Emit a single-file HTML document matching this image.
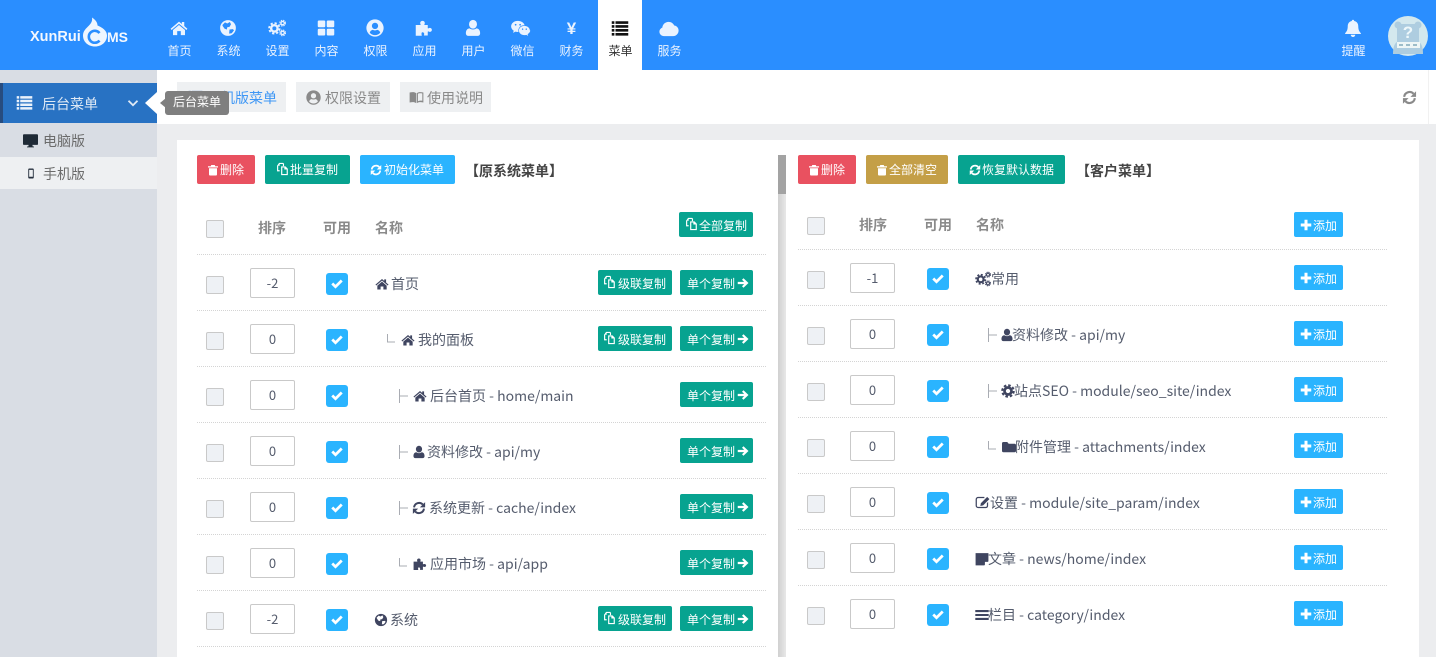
<!DOCTYPE html>
<html lang="zh"><head><meta charset="utf-8"><title>菜单</title>
<style>
*{box-sizing:border-box}
html,body{margin:0;padding:0;width:1436px;height:657px;overflow:hidden;background:#ecedef;font-family:"Noto Sans CJK SC","Liberation Sans",sans-serif;font-size:14px;color:#555c6d}
div,span,svg{position:absolute}
svg{fill:currentColor;display:block}
.nt{white-space:nowrap;line-height:20px}
.nav{top:0;width:49px;height:70px;color:#eaf3ff;text-align:center}
.nav svg{left:15px;top:19px;width:18px;height:18px}
.nav span{left:0;width:49px;top:42px;font-size:12px;line-height:18px}
.btn{height:29px;border-radius:2px;color:#fff;font-size:12px;line-height:30px;white-space:nowrap}
.btn svg{width:12px;height:12px;top:9px}
.btn svg.cp{width:14px;height:14px;top:7px;margin-left:-1px}
.b2{height:25px;line-height:27px}.b2 svg{top:7px}.b2 svg.cp{top:5px}
.red{background:#e95160}.teal{background:#07a390}.blue{background:#2ab4ff}.gold{background:#c49f47}
.row{left:0;top:0;width:1436px;height:56px}
.line{top:0;height:0;border-top:1px dotted #d4d4d4}
.cb{width:18px;height:18px;background:#eef1f5;border:1px solid #c9c9c9;border-radius:2px;top:22px}
.inp{width:45px;height:30px;top:14px;background:#fff;border:1px solid #c9c9c9;border-radius:2px;text-align:center;font-size:13px;line-height:27px;color:#555c6d}
.chk{width:22px;height:22px;top:19px;background:#2ab4ff;border-radius:3px}
.chk svg{left:5px;top:4px;width:12px;height:12px;color:#fff}
.name{top:20px;font-size:14px;line-height:20px;white-space:nowrap}
.ic{color:#3f4560;top:23px;width:14px;height:14px}
.tree{top:23px;width:9px;height:14px;fill:none;stroke:#a9acb3;stroke-width:1}
.hd{font-size:14px;font-weight:700;color:#8a8a8a;line-height:20px;white-space:nowrap}
.tab{top:82px;height:30px;background:#eef0f2;font-size:14px;line-height:32px;color:#8a8a8a;white-space:nowrap}
</style></head><body>
<svg width="0" height="0" style="position:absolute">
<defs>
<symbol id="home" viewBox="0 0 24 24"><path d="M12 3.500 0.800 13l1.300 1.600L12 6.300l9.900 8.300 1.300-1.600L19 9.400V4h-3.200v2.700z"/><path d="M12 8 4 14.700V21.500h5.600v-5.300h4.800v5.300H20v-6.800z"/></symbol>
<symbol id="globe" viewBox="0 0 24 24"><path fill-rule="evenodd" d="M12 1.500a10.500 10.500 0 1 0 0 21 10.500 10.500 0 0 0 0-21zM8 4.500l3 1.500 3.500-2 1.500 3-2 3.500-3 .5-.5 3-3-1L5 9.500 4.500 8zM14 14l4.500-.5 1.500 1.500-3 4-3.500.5z"/></symbol>
<symbol id="cogs" viewBox="0 0 24 24"><circle cx="8.500" cy="12.500" r="4.300" fill="none" stroke="currentColor" stroke-width="3.200"/><circle cx="8.500" cy="12.500" r="7" fill="none" stroke="currentColor" stroke-width="2.400" stroke-dasharray="3 2.500"/><circle cx="19.500" cy="5.500" r="2.300" fill="none" stroke="currentColor" stroke-width="1.800"/><circle cx="19.500" cy="5.500" r="3.900" fill="none" stroke="currentColor" stroke-width="1.300" stroke-dasharray="1.800 1.300"/><circle cx="19.500" cy="18.500" r="2.300" fill="none" stroke="currentColor" stroke-width="1.800"/><circle cx="19.500" cy="18.500" r="3.900" fill="none" stroke="currentColor" stroke-width="1.300" stroke-dasharray="1.800 1.300"/></symbol>
<symbol id="th" viewBox="0 0 24 24"><rect x="1" y="2" width="10" height="9" rx="1.500"/><rect x="13" y="2" width="10" height="9" rx="1.500"/><rect x="1" y="13" width="10" height="9" rx="1.500"/><rect x="13" y="13" width="10" height="9" rx="1.500"/></symbol>
<symbol id="ucircle" viewBox="0 0 24 24"><path fill-rule="evenodd" d="M12 .5a11.500 11.500 0 1 0 0 23 11.500 11.500 0 0 0 0-23zM12 5a4.200 4.200 0 1 1 0 8.400A4.200 4.200 0 0 1 12 5zm0 16.500a9.500 9.500 0 0 1-7-3.200c.6-2.300 2.400-3.800 4.300-3.800 1 .5 1.800.7 2.700.7s1.700-.2 2.700-.7c1.900 0 3.700 1.500 4.300 3.800a9.500 9.500 0 0 1-7 3.200z"/></symbol>
<symbol id="puzzle" viewBox="0 0 24 24"><path d="M1 8h6c1 0 .2-1.200 0-2-.4-2 1-3.500 3-3.500s3.400 1.500 3 3.500c-.2.800-1 2 0 2h4v4c0 1 1.200.2 2 0 1.500-.4 3.500.5 3.500 2.500s-2 3-3.500 2.500c-.8-.2-2-1-2 0v5h-4.500c-1 0-.2-1-.2-2 0-1.300-1-2.300-2.300-2.300S8.700 19 8.700 20.300c0 1 .8 2 0 2H1z"/></symbol>
<symbol id="user" viewBox="0 0 24 24"><ellipse cx="12" cy="7" rx="5.300" ry="5.800"/><path d="M2.500 19c0-4 2-6.500 5-6.500 1.300 1 2.800 1.500 4.500 1.500s3.200-.5 4.500-1.500c3 0 5 2.500 5 6.500 0 2-1.300 3.500-3.300 3.500H5.800c-2 0-3.300-1.500-3.300-3.500z"/></symbol>
<symbol id="wechat" viewBox="0 0 26 24"><path fill-rule="evenodd" d="M9.500 2.500C4.500 2.500.5 5.700.5 9.800c0 2.400 1.300 4.300 3.500 5.800L3 18.500l3.300-1.700c1.100.3 2 .5 3.200.5h.9a7 7 0 0 1-.3-2c0-3.800 3.300-7 7.500-7h.9C17.600 5 13.900 2.500 9.500 2.500zM6.500 6.500a1.200 1.200 0 1 1 0 2.400 1.200 1.200 0 0 1 0-2.400zm6 0a1.200 1.200 0 1 1 0 2.400 1.200 1.200 0 0 1 0-2.400z"/><path fill-rule="evenodd" d="M25.500 15.300c0-3.400-3.400-6.200-7.300-6.200-4.100 0-7.300 2.800-7.300 6.200s3.200 6.200 7.300 6.200c.8 0 1.700-.2 2.500-.4l2.500 1.400-.7-2.300c2-1.400 3.500-3 3.500-4.900zM15.800 12.500a1 1 0 1 1 0 2 1 1 0 0 1 0-2zm4.900 0a1 1 0 1 1 0 2 1 1 0 0 1 0-2z"/></symbol>
<symbol id="list" viewBox="0 0 24 24"><path d="M1 3h3.500v3.500H1zM6 3h17v3.500H6zM1 8.200h3.500v3.500H1zM6 8.200h17v3.500H6zM1 13.400h3.500v3.500H1zM6 13.400h17v3.500H6zM1 18.600h3.500v3.500H1zM6 18.600h17v3.500H6z"/></symbol>
<symbol id="cloud" viewBox="0 0 24 24"><path d="M6 20.500c-3 0-5.500-2.300-5.500-5.200 0-2.300 1.400-4.200 3.500-5C4.300 6.500 7.500 3.500 11.500 3.500c3 0 5.500 1.700 6.700 4.300 3 .2 5.300 2.900 5.300 6.100 0 3.600-2.900 6.600-6.500 6.600z"/></symbol>
<symbol id="bell" viewBox="0 0 24 24"><path d="M12 1c-1 0-1.600.7-1.600 1.700C7 3.500 5 6 5 9.500c0 6-2 7.500-3.500 9.500v1h21v-1C21 17 19 15.500 19 9.500c0-3.500-2-6-5.400-6.800C13.600 1.700 13 1 12 1zM9 21a3 3 0 0 0 6 0z"/></symbol>
<symbol id="sync" viewBox="0 0 24 24"><path d="M3.500 11a8.700 8.700 0 0 1 15-5" fill="none" stroke="currentColor" stroke-width="3.400"/><path d="M22.500 2v9h-9z"/><path d="M20.500 13a8.700 8.700 0 0 1-15 5" fill="none" stroke="currentColor" stroke-width="3.400"/><path d="M1.500 22v-9h9z"/></symbol>
<symbol id="trash" viewBox="0 0 24 24"><path d="M8.500 2h7l1 2.500H22V7H2V4.500h5.500zM4 8.500h16V21a2 2 0 0 1-2 2H6a2 2 0 0 1-2-2z"/></symbol>
<symbol id="copy" viewBox="0 0 24 24"><path d="M7 1.500h7l1.500 1.500v4h-2V3.500H8v3l-2.500 0V14H8v2H3.500V6.500zM10.500 7.500H18l4 4v11H10.500zM12.500 9.500v11h7.500V12.800h-4V9.500z" fill-rule="evenodd"/></symbol>
<symbol id="arrow" viewBox="0 0 24 24"><path d="M13 2.500 23 12 13 21.500l-3-3 4.300-4.300H1.500V9.800h12.800L10 5.500z"/></symbol>
<symbol id="plus" viewBox="0 0 24 24"><path d="M9 1.500h6V9h7.500v6H15v7.500H9V15H1.500V9H9z"/></symbol>
<symbol id="check" viewBox="0 0 24 24"><path d="M2.500 13 9 19.500 21.500 7" fill="none" stroke="currentColor" stroke-width="5.400"/></symbol>
<symbol id="desktop" viewBox="0 0 24 24"><path d="M1.500 2h21a1.500 1.500 0 0 1 1.500 1.500v14a1.500 1.500 0 0 1-1.500 1.500H15l.6 2.500h2v1.500H6.400v-1.500h2L9 19H1.500A1.500 1.500 0 0 1 0 17.500v-14A1.500 1.500 0 0 1 1.500 2z"/></symbol>
<symbol id="mobile" viewBox="0 0 12 24"><path fill-rule="evenodd" d="M2 1h8a2 2 0 0 1 2 2v18a2 2 0 0 1-2 2H2a2 2 0 0 1-2-2V3a2 2 0 0 1 2-2zM2 4v15h8V4z"/></symbol>
<symbol id="book" viewBox="0 0 24 24"><path d="M1 4c4-1 8-1 10.500 1v16C9 19 5 19 1 20z"/><path fill-rule="evenodd" d="M12.500 5C15 3 19 3 23 4v16c-4-1-8-1-10.500 1zM14.300 6v12c2-1 4.500-1.200 7-.8V5.600C19 5.200 16 5 14.300 6z"/></symbol>
<symbol id="edit" viewBox="0 0 24 24"><path d="M17.500 21H5a4 4 0 0 1-4-4V7a4 4 0 0 1 4-4h10v2H5a2 2 0 0 0-2 2v10a2 2 0 0 0 2 2h12a2 2 0 0 0 2-2v-4l2-2v6a4 4 0 0 1-3.500 4z" /><path d="M19.500 3 23 6.500 13 16.500l-4.500 1 1-4.500z"/></symbol>
<symbol id="folder" viewBox="0 0 24 24"><path d="M2.500 3.500h6.500l2.500 3h10A2.500 2.500 0 0 1 24 9v9.500a2.500 2.500 0 0 1-2.500 2.500h-19A2.500 2.500 0 0 1 0 18.500V6a2.500 2.500 0 0 1 2.500-2.500z"/></symbol>
<symbol id="cog" viewBox="0 0 24 24"><circle cx="12" cy="12" r="6" fill="none" stroke="currentColor" stroke-width="4.600"/><circle cx="12" cy="12" r="9.800" fill="none" stroke="currentColor" stroke-width="3.600" stroke-dasharray="4.400 3.300"/></symbol>
<symbol id="bars" viewBox="0 0 24 24"><path d="M.5 3.500h23v3.600H.5zM.5 10.200h23v3.600H.5zM.5 16.900h23v3.600H.5z"/></symbol>
<symbol id="note" viewBox="0 0 24 24"><path d="M1 2h22v14l-7 7H1z"/><path d="M17 17h6l-6 6z" fill="#fff"/></symbol>
<symbol id="chev" viewBox="0 0 24 24"><path d="M3 7.500l9 9 9-9" fill="none" stroke="currentColor" stroke-width="3.600"/></symbol>
<symbol id="t1" viewBox="0 0 9 14"><path d="M.5 0v14M.5 7H9"/></symbol>
<symbol id="t2" viewBox="0 0 9 14"><path d="M.5 1v8H8"/></symbol>
</defs></svg>

<!-- header -->
<div style="left:0;top:0;width:1436px;height:70px;background:#2a8eff"></div>
<div style="left:30px;top:28px;font:700 14.500px/18px 'Liberation Sans',sans-serif;color:#f4f8ff;white-space:nowrap">XunRui</div>
<div style="left:107px;top:28px;font:700 14px/18px 'Liberation Sans',sans-serif;color:#f4f8ff;white-space:nowrap">MS</div>
<svg style="left:82px;top:17px;width:26px;height:30px;color:#eef6ff" viewBox="0 0 26 30"><path d="M13 29.500C6 29.500 1 24.700 1 18.500 1 14 4 11.500 7 8.500 9.500 6 10.500 3.500 10 .5c4 2.500 5.500 5.500 5.500 8 3.500 1.500 9.500 4.500 9.500 10 0 6.200-5 11-12 11z"/><path d="M17.500 16a6 6 0 1 0 0 7.500" fill="none" stroke="#2a8eff" stroke-width="2.600"/></svg>

<div class="nav" style="left:155px"><svg><use href="#home"/></svg><span>首页</span></div>
<div class="nav" style="left:204px"><svg><use href="#globe"/></svg><span>系统</span></div>
<div class="nav" style="left:253px"><svg><use href="#cogs"/></svg><span>设置</span></div>
<div class="nav" style="left:302px"><svg><use href="#th"/></svg><span>内容</span></div>
<div class="nav" style="left:351px"><svg><use href="#ucircle"/></svg><span>权限</span></div>
<div class="nav" style="left:400px"><svg><use href="#puzzle"/></svg><span>应用</span></div>
<div class="nav" style="left:449px"><svg><use href="#user"/></svg><span>用户</span></div>
<div class="nav" style="left:498px"><svg style="left:12px;width:21px"><use href="#wechat"/></svg><span>微信</span></div>
<div class="nav" style="left:547px"><div style="left:0;width:49px;top:18px;font-size:17px;line-height:22px;font-weight:700;font-family:'Liberation Sans',sans-serif">¥</div><span>财务</span></div>
<div style="left:598px;top:0;width:44px;height:70px;background:#fff"></div>
<div class="nav" style="left:596px;color:#111"><svg><use href="#list"/></svg><span style="color:#333">菜单</span></div>
<div class="nav" style="left:645px"><svg style="left:14px;width:20px;height:20px"><use href="#cloud"/></svg><span>服务</span></div>
<div class="nav" style="left:1329px"><svg><use href="#bell"/></svg><span>提醒</span></div>
<svg style="left:1388px;top:16px;width:40px;height:40px" viewBox="0 0 40 40"><circle cx="20" cy="20" r="20" fill="#d3e8ee"/><circle cx="10" cy="9" r="3.500" fill="#aecde0"/><circle cx="30" cy="9" r="3.500" fill="#aecde0"/><path d="M9 8h22v18H9z" fill="#aecde0"/><path d="M5 38c0-8 2-12 6-13h18c4 1 6 5 6 13z" fill="#aecde0"/><rect x="9" y="26" width="23" height="6" fill="#eef6f6"/><path d="M11 28h4v2h-4zM18 28h4v2h-4zM25 28h4v2h-4z" fill="#9dbdc9"/><text x="20" y="22" font-family="Liberation Sans,sans-serif" font-size="17" font-weight="700" fill="#eef8fb" text-anchor="middle">?</text></svg>

<!-- sidebar -->
<div style="left:0;top:70px;width:157px;height:587px;background:#d9dde4"></div>
<div style="left:0;top:83px;width:157px;height:40px;background:#2872c3;border-left:3px solid #274c7f"></div>
<svg style="left:16px;top:94px;width:17px;height:17px;color:#eaf2fb"><use href="#list"/></svg>
<div class="nt" style="left:42px;top:94px;color:#dfe9f5">后台菜单</div>
<svg style="left:127px;top:97px;width:12px;height:12px;color:#dfe9f5"><use href="#chev"/></svg>
<svg style="left:145px;top:92px;width:12px;height:22px;color:#fff" viewBox="0 0 12 22"><path d="M12 0v22L0 11z"/></svg>
<svg style="left:23px;top:133px;width:15px;height:15px;color:#1f2a36"><use href="#desktop"/></svg>
<div class="nt" style="left:43px;top:131px;color:#6b6b6b">电脑版</div>
<div style="left:0;top:157px;width:157px;height:32px;background:#eef0f2"></div>
<svg style="left:28px;top:168px;width:6px;height:11px;color:#26303e"><use href="#mobile"/></svg>
<div class="nt" style="left:43px;top:164px;color:#6b6b6b">手机版</div>

<!-- top bar -->
<div style="left:157px;top:70px;width:1279px;height:54px;background:#fff"></div>
<div style="left:1428px;top:70px;width:1px;height:54px;background:#f1f1f1"></div>
<div class="tab" style="left:177px;width:109px;color:#3f97f5"><svg style="left:11px;top:7px;width:15px;height:15px;color:#2c5f9e"><use href="#list"/></svg><span style="left:30px;top:0">手机版菜单</span></div>
<div class="tab" style="left:296px;width:94px"><svg style="left:10px;top:8px;width:15px;height:15px"><use href="#ucircle"/></svg><span style="left:29px;top:0">权限设置</span></div>
<div class="tab" style="left:400px;width:91px"><svg style="left:9px;top:8px;width:15px;height:15px"><use href="#book"/></svg><span style="left:27px;top:0">使用说明</span></div>
<svg style="left:1402px;top:90px;width:15px;height:15px;color:#8a8a8a"><use href="#sync"/></svg>
<svg style="left:160px;top:98px;width:6px;height:10px;color:#7f7f7f" viewBox="0 0 6 10"><path d="M6 0v10L0 5z"/></svg>
<div style="left:165px;top:91px;width:64px;height:24px;background:#7f7f7f;border-radius:3px;color:#fff;font-size:12px;line-height:22px;text-align:center">后台菜单</div>

<!-- panel -->
<div style="left:177px;top:140px;width:1242px;height:517px;background:#fff"></div>
<div style="left:778px;top:155px;width:8px;height:502px;background:linear-gradient(90deg,#d0d0d0,#e8e8e8)"></div>
<div style="left:778px;top:155px;width:8px;height:39px;background:#a3a3a3"></div>

<div class="btn red" style="left:197px;top:155px;width:58px"><svg style="left:10px"><use href="#trash"/></svg><span style="left:23px;top:0">删除</span></div>
<div class="btn teal" style="left:265px;top:155px;width:85px"><svg class="cp" style="left:11px"><use href="#copy"/></svg><span style="left:25px;top:0">批量复制</span></div>
<div class="btn blue" style="left:360px;top:155px;width:95px"><svg style="left:10px"><use href="#sync"/></svg><span style="left:24px;top:0">初始化菜单</span></div>
<div class="nt" style="left:465px;top:161px;font-weight:700;color:#444">【原系统菜单】</div>

<div class="btn red" style="left:798px;top:155px;width:58px"><svg style="left:10px"><use href="#trash"/></svg><span style="left:23px;top:0">删除</span></div>
<div class="btn gold" style="left:866px;top:155px;width:82px"><svg style="left:10px"><use href="#trash"/></svg><span style="left:23px;top:0">全部清空</span></div>
<div class="btn teal" style="left:958px;top:155px;width:107px"><svg style="left:11px"><use href="#sync"/></svg><span style="left:24px;top:0">恢复默认数据</span></div>
<div class="nt" style="left:1076px;top:161px;font-weight:700;color:#444">【客户菜单】</div>

<!-- left header -->
<div class="cb" style="left:206px;top:220px"></div>
<div class="hd" style="left:258px;top:218px">排序</div>
<div class="hd" style="left:323px;top:218px">可用</div>
<div class="hd" style="left:375px;top:218px">名称</div>
<div class="btn teal b2" style="left:679px;top:212px;width:74px"><svg class="cp" style="left:6px"><use href="#copy"/></svg><span style="left:20px;top:0">全部复制</span></div>

<!-- left rows -->
<div class="row" style="top:254px"><div class="line" style="left:197px;width:569px"></div><div class="cb" style="left:206px"></div><div class="inp" style="left:250px">-2</div><div class="chk" style="left:326px"><svg><use href="#check"/></svg></div><svg class="ic" style="left:375px"><use href="#home"/></svg><div class="name" style="left:391px">首页</div>
<div class="btn teal b2" style="left:598px;top:16px;width:74px"><svg class="cp" style="left:5px"><use href="#copy"/></svg><span style="left:20px;top:0">级联复制</span></div><div class="btn teal b2" style="left:680px;top:16px;width:73px"><span style="left:7px;top:0">单个复制</span><svg style="left:57px"><use href="#arrow"/></svg></div></div>

<div class="row" style="top:310px"><div class="line" style="left:197px;width:569px"></div><div class="cb" style="left:206px"></div><div class="inp" style="left:250px">0</div><div class="chk" style="left:326px"><svg><use href="#check"/></svg></div><svg class="tree" style="left:387px"><use href="#t2"/></svg><svg class="ic" style="left:401px"><use href="#home"/></svg><div class="name" style="left:418px">我的面板</div>
<div class="btn teal b2" style="left:598px;top:16px;width:74px"><svg class="cp" style="left:5px"><use href="#copy"/></svg><span style="left:20px;top:0">级联复制</span></div><div class="btn teal b2" style="left:680px;top:16px;width:73px"><span style="left:7px;top:0">单个复制</span><svg style="left:57px"><use href="#arrow"/></svg></div></div>

<div class="row" style="top:366px"><div class="line" style="left:197px;width:569px"></div><div class="cb" style="left:206px"></div><div class="inp" style="left:250px">0</div><div class="chk" style="left:326px"><svg><use href="#check"/></svg></div><svg class="tree" style="left:399px"><use href="#t1"/></svg><svg class="ic" style="left:413px"><use href="#home"/></svg><div class="name" style="left:430px">后台首页 - home/main</div>
<div class="btn teal b2" style="left:680px;top:16px;width:73px"><span style="left:7px;top:0">单个复制</span><svg style="left:57px"><use href="#arrow"/></svg></div></div>

<div class="row" style="top:422px"><div class="line" style="left:197px;width:569px"></div><div class="cb" style="left:206px"></div><div class="inp" style="left:250px">0</div><div class="chk" style="left:326px"><svg><use href="#check"/></svg></div><svg class="tree" style="left:399px"><use href="#t1"/></svg><svg class="ic" style="left:412px"><use href="#user"/></svg><div class="name" style="left:427px">资料修改 - api/my</div>
<div class="btn teal b2" style="left:680px;top:16px;width:73px"><span style="left:7px;top:0">单个复制</span><svg style="left:57px"><use href="#arrow"/></svg></div></div>

<div class="row" style="top:478px"><div class="line" style="left:197px;width:569px"></div><div class="cb" style="left:206px"></div><div class="inp" style="left:250px">0</div><div class="chk" style="left:326px"><svg><use href="#check"/></svg></div><svg class="tree" style="left:399px"><use href="#t1"/></svg><svg class="ic" style="left:412px"><use href="#sync"/></svg><div class="name" style="left:429px">系统更新 - cache/index</div>
<div class="btn teal b2" style="left:680px;top:16px;width:73px"><span style="left:7px;top:0">单个复制</span><svg style="left:57px"><use href="#arrow"/></svg></div></div>

<div class="row" style="top:534px"><div class="line" style="left:197px;width:569px"></div><div class="cb" style="left:206px"></div><div class="inp" style="left:250px">0</div><div class="chk" style="left:326px"><svg><use href="#check"/></svg></div><svg class="tree" style="left:399px"><use href="#t2"/></svg><svg class="ic" style="left:413px"><use href="#puzzle"/></svg><div class="name" style="left:430px">应用市场 - api/app</div>
<div class="btn teal b2" style="left:680px;top:16px;width:73px"><span style="left:7px;top:0">单个复制</span><svg style="left:57px"><use href="#arrow"/></svg></div></div>

<div class="row" style="top:590px"><div class="line" style="left:197px;width:569px"></div><div class="cb" style="left:206px"></div><div class="inp" style="left:250px">-2</div><div class="chk" style="left:326px"><svg><use href="#check"/></svg></div><svg class="ic" style="left:374px"><use href="#globe"/></svg><div class="name" style="left:390px">系统</div>
<div class="btn teal b2" style="left:598px;top:16px;width:74px"><svg class="cp" style="left:5px"><use href="#copy"/></svg><span style="left:20px;top:0">级联复制</span></div><div class="btn teal b2" style="left:680px;top:16px;width:73px"><span style="left:7px;top:0">单个复制</span><svg style="left:57px"><use href="#arrow"/></svg></div></div>
<div class="line" style="left:197px;width:569px;top:646px"></div>

<!-- right header -->
<div class="cb" style="left:807px;top:217px"></div>
<div class="hd" style="left:859px;top:215px">排序</div>
<div class="hd" style="left:924px;top:215px">可用</div>
<div class="hd" style="left:976px;top:215px">名称</div>
<div class="btn blue b2" style="left:1294px;top:212px;width:49px"><svg style="left:6px"><use href="#plus"/></svg><span style="left:19px;top:0">添加</span></div>

<!-- right rows -->
<div class="row" style="top:249px"><div class="line" style="left:798px;width:589px"></div><div class="cb" style="left:807px"></div><div class="inp" style="left:850px">-1</div><div class="chk" style="left:927px"><svg><use href="#check"/></svg></div><svg class="ic" style="left:975px;width:16px;height:16px;top:22px"><use href="#cogs"/></svg><div class="name" style="left:991px">常用</div>
<div class="btn blue b2" style="left:1294px;top:16px;width:49px"><svg style="left:6px"><use href="#plus"/></svg><span style="left:19px;top:0">添加</span></div></div>

<div class="row" style="top:305px"><div class="line" style="left:798px;width:589px"></div><div class="cb" style="left:807px"></div><div class="inp" style="left:850px">0</div><div class="chk" style="left:927px"><svg><use href="#check"/></svg></div><svg class="tree" style="left:988px"><use href="#t1"/></svg><svg class="ic" style="left:1000px"><use href="#user"/></svg><div class="name" style="left:1012px">资料修改 - api/my</div>
<div class="btn blue b2" style="left:1294px;top:16px;width:49px"><svg style="left:6px"><use href="#plus"/></svg><span style="left:19px;top:0">添加</span></div></div>

<div class="row" style="top:361px"><div class="line" style="left:798px;width:589px"></div><div class="cb" style="left:807px"></div><div class="inp" style="left:850px">0</div><div class="chk" style="left:927px"><svg><use href="#check"/></svg></div><svg class="tree" style="left:988px"><use href="#t1"/></svg><svg class="ic" style="left:1001px"><use href="#cog"/></svg><div class="name" style="left:1014px">站点SEO - module/seo_site/index</div>
<div class="btn blue b2" style="left:1294px;top:16px;width:49px"><svg style="left:6px"><use href="#plus"/></svg><span style="left:19px;top:0">添加</span></div></div>

<div class="row" style="top:417px"><div class="line" style="left:798px;width:589px"></div><div class="cb" style="left:807px"></div><div class="inp" style="left:850px">0</div><div class="chk" style="left:927px"><svg><use href="#check"/></svg></div><svg class="tree" style="left:988px"><use href="#t2"/></svg><svg class="ic" style="left:1002px"><use href="#folder"/></svg><div class="name" style="left:1015px">附件管理 - attachments/index</div>
<div class="btn blue b2" style="left:1294px;top:16px;width:49px"><svg style="left:6px"><use href="#plus"/></svg><span style="left:19px;top:0">添加</span></div></div>

<div class="row" style="top:473px"><div class="line" style="left:798px;width:589px"></div><div class="cb" style="left:807px"></div><div class="inp" style="left:850px">0</div><div class="chk" style="left:927px"><svg><use href="#check"/></svg></div><svg class="ic" style="left:975px;width:15px;height:15px;top:22px"><use href="#edit"/></svg><div class="name" style="left:990px">设置 - module/site_param/index</div>
<div class="btn blue b2" style="left:1294px;top:16px;width:49px"><svg style="left:6px"><use href="#plus"/></svg><span style="left:19px;top:0">添加</span></div></div>

<div class="row" style="top:529px"><div class="line" style="left:798px;width:589px"></div><div class="cb" style="left:807px"></div><div class="inp" style="left:850px">0</div><div class="chk" style="left:927px"><svg><use href="#check"/></svg></div><svg class="ic" style="left:975px"><use href="#note"/></svg><div class="name" style="left:988px">文章 - news/home/index</div>
<div class="btn blue b2" style="left:1294px;top:16px;width:49px"><svg style="left:6px"><use href="#plus"/></svg><span style="left:19px;top:0">添加</span></div></div>

<div class="row" style="top:585px"><div class="line" style="left:798px;width:589px"></div><div class="cb" style="left:807px"></div><div class="inp" style="left:850px">0</div><div class="chk" style="left:927px"><svg><use href="#check"/></svg></div><svg class="ic" style="left:975px"><use href="#bars"/></svg><div class="name" style="left:988px">栏目 - category/index</div>
<div class="btn blue b2" style="left:1294px;top:16px;width:49px"><svg style="left:6px"><use href="#plus"/></svg><span style="left:19px;top:0">添加</span></div></div>
</body></html>
